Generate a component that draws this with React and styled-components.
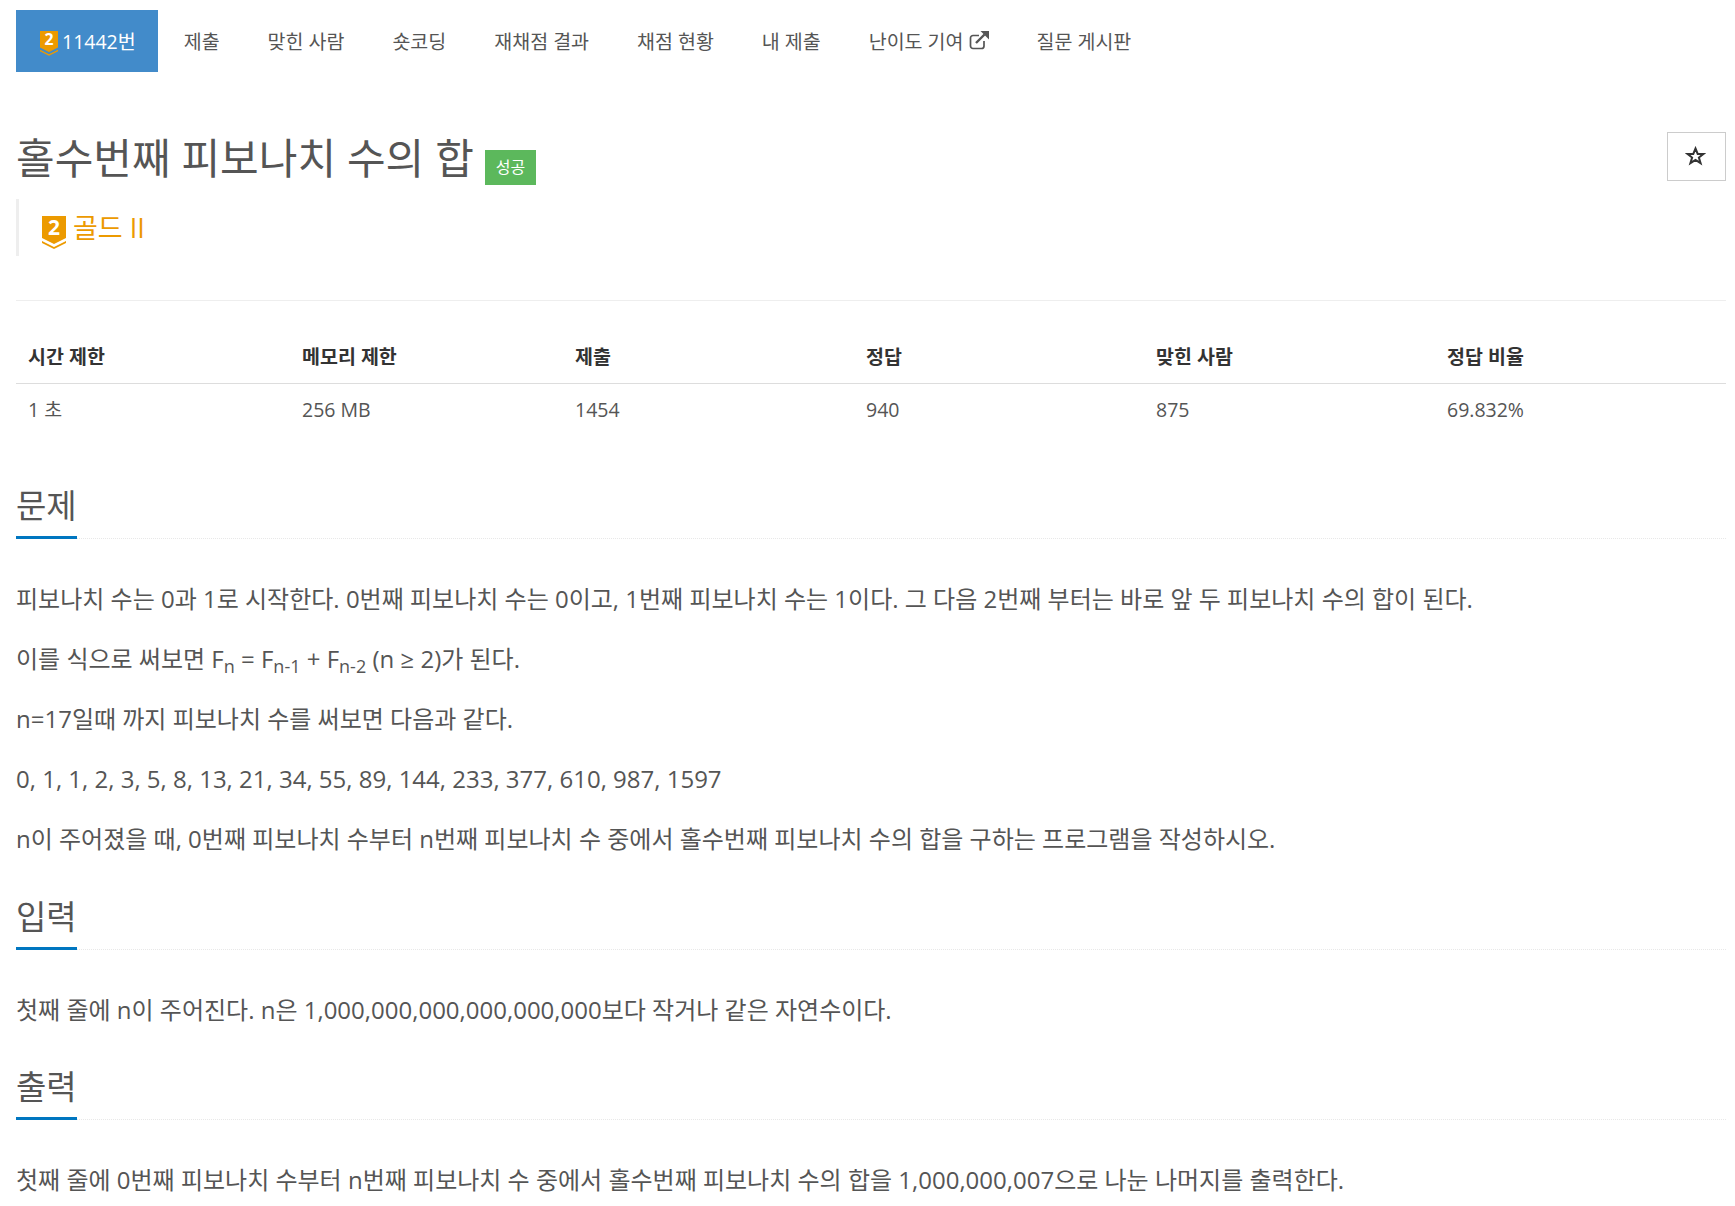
import React from 'react'
import styled, { createGlobalStyle } from 'styled-components'

const GlobalStyle = createGlobalStyle`
  html, body {
    margin: 0;
    padding: 0;
    background: #fff;
    overflow: hidden;
  }
  body {
    font-family: "Open Sans", "Noto Sans CJK KR", sans-serif;
    color: #555;
  }
`

const tabs = ['제출', '맞힌 사람', '숏코딩', '재채점 결과', '채점 현황', '내 제출']

const Badge = ({ width, shift = 0, color = '#ec9a00' }) => (
  <BadgeIcon $shift={shift} width={width} viewBox="0 0 24 33" overflow="visible" aria-hidden="true">
    <path d="M0 0H24V22L12 28L0 22Z" fill={color} />
    <path d="M0 25L12 31L24 25V27L12 33L0 27Z" fill={color} />
    <text x="12" y="19" textAnchor="middle" fontSize="21" fontWeight="700" fill="#fff" fontFamily="Open Sans">2</text>
  </BadgeIcon>
)

const ExternalIcon = () => (
  <svg width="20" height="20" viewBox="0 0 20 20" fill="none" stroke="#555" aria-hidden="true">
    <path d="M15 11V16a2.500 2.500 0 0 1-2.500 2.500H4A2.500 2.500 0 0 1 1.500 16V8A2.500 2.500 0 0 1 4 5.500H10" strokeWidth="1.700" />
    <path d="M7 13L15.500 4.500" strokeWidth="2.400" />
    <path d="M11.500 1H20V9.500Z" fill="#555" stroke="none" />
  </svg>
)

const StarIcon = () => (
  <svg width="21" height="20" viewBox="0 0 21 20" fill="none" stroke="#333" strokeWidth="2" aria-hidden="true">
    <path d="M10.500 2.500L12.700 7.900H18.600L13.900 11.500L15.600 17.200L10.500 13.900L5.400 17.200L7.100 11.500L2.400 7.900H8.300Z" />
  </svg>
)

const App = () => (
  <Page>
    <GlobalStyle />
    <Nav>
      <ActiveTab>
        <Badge width={18} shift={6} />
        11442번
      </ActiveTab>
      {tabs.map((tab) => (
        <Tab key={tab}>{tab}</Tab>
      ))}
      <Tab>
        난이도 기여
        <ExternalIcon />
      </Tab>
      <Tab>질문 게시판</Tab>
    </Nav>

    <TitleRow>
      <Title>
        홀수번째 피보나치 수의 합
        <Label>성공</Label>
      </Title>
      <StarButton>
        <StarIcon />
      </StarButton>
    </TitleRow>

    <Tier>
      <Badge width={24} shift={9} />
      <TierName>골드 II</TierName>
    </Tier>

    <Rule />

    <InfoTable>
      <thead>
        <tr>
          <Th $width={274}>시간 제한</Th>
          <Th $width={273}>메모리 제한</Th>
          <Th $width={291}>제출</Th>
          <Th $width={290}>정답</Th>
          <Th $width={291}>맞힌 사람</Th>
          <Th>정답 비율</Th>
        </tr>
      </thead>
      <tbody>
        <tr>
          <Td>1 초</Td>
          <Td>256 MB</Td>
          <Td>1454</Td>
          <Td>940</Td>
          <Td>875</Td>
          <Td>69.832%</Td>
        </tr>
      </tbody>
    </InfoTable>

    <Section>
      <Headline><h2>문제</h2></Headline>
      <Text>
        <p>피보나치 수는 0과 1로 시작한다. 0번째 피보나치 수는 0이고, 1번째 피보나치 수는 1이다. 그 다음 2번째 부터는 바로 앞 두 피보나치 수의 합이 된다.</p>
        <p>이를 식으로 써보면 F<sub>n</sub> = F<sub>n-1</sub> + F<sub>n-2</sub> (n ≥ 2)가 된다.</p>
        <p>n=17일때 까지 피보나치 수를 써보면 다음과 같다.</p>
        <p>0, 1, 1, 2, 3, 5, 8, 13, 21, 34, 55, 89, 144, 233, 377, 610, 987, 1597</p>
        <p>n이 주어졌을 때, 0번째 피보나치 수부터 n번째 피보나치 수 중에서 홀수번째 피보나치 수의 합을 구하는 프로그램을 작성하시오.</p>
      </Text>
    </Section>

    <Section>
      <Headline><h2>입력</h2></Headline>
      <Text>
        <p>첫째 줄에 n이 주어진다. n은 1,000,000,000,000,000,000보다 작거나 같은 자연수이다.</p>
      </Text>
    </Section>

    <Section>
      <Headline><h2>출력</h2></Headline>
      <Text>
        <p>첫째 줄에 0번째 피보나치 수부터 n번째 피보나치 수 중에서 홀수번째 피보나치 수의 합을 1,000,000,007으로 나눈 나머지를 출력한다.</p>
      </Text>
    </Section>
  </Page>
)

const BadgeIcon = styled.svg`
  flex-shrink: 0;
  margin-top: ${({ $shift }) => $shift}px;
`

const Page = styled.div`
  box-sizing: border-box;
  height: 1206px;
  padding: 10px 9px 0 16px;
  overflow: hidden;
`

const Nav = styled.nav`
  display: flex;
  height: 62px;
`

const Tab = styled.a`
  display: flex;
  align-items: center;
  gap: 5px;
  padding: 0 24px 2px;
  font-size: 19.5px;
  color: #555;
  white-space: pre;
`

const ActiveTab = styled(Tab)`
  gap: 4px;
  padding-right: 22px;
  margin-right: 2px;
  background: #428bca;
  color: #fff;
`

const TitleRow = styled.div`
  display: flex;
  justify-content: space-between;
  align-items: flex-start;
  margin-top: 60px;
`

const Title = styled.h1`
  display: flex;
  align-items: flex-end;
  margin: 0;
  padding-top: 4px;
  font-size: 42px;
  line-height: 44px;
  font-weight: 400;
  color: #555;
`

const Label = styled.span`
  margin: 0 0 -5px 11px;
  padding: 8px 11px 9px;
  background: #5cb85c;
  color: #fff;
  font-size: 16px;
  line-height: 18px;
`

const StarButton = styled.div`
  display: flex;
  align-items: center;
  justify-content: center;
  box-sizing: border-box;
  width: 59px;
  height: 49px;
  padding: 0 2px 2px 0;
  border: 1px solid #ccc;
`

const Tier = styled.div`
  display: flex;
  align-items: center;
  gap: 7px;
  height: 57px;
  margin-top: 18px;
  padding-left: 23px;
  border-left: 3px solid #eee;
`

const TierName = styled.span`
  margin-bottom: 2px;
  font-size: 27px;
  color: #ec9a00;
`

const Rule = styled.hr`
  margin: 44px 0 0;
  border: 0;
  border-top: 1px solid #eee;
`

const InfoTable = styled.table`
  width: 100%;
  margin-top: 30px;
  border-collapse: collapse;
  table-layout: fixed;
  font-size: 19.5px;
`

const Th = styled.th`
  box-sizing: border-box;
  width: ${({ $width }) => ($width ? `${$width}px` : 'auto')};
  padding: 12px;
  line-height: 28px;
  text-align: left;
  font-weight: 700;
  color: #333;
  border-bottom: 1px solid #ddd;
`

const Td = styled.td`
  padding: 12px;
  line-height: 28px;
  color: #555;
`

const Section = styled.section`
  margin-top: 47px;

  & + & {
    margin-top: 38.5px;
  }
`

const Headline = styled.div`
  border-bottom: 1px dotted #e8e8e8;

  h2 {
    display: inline-block;
    margin: 0 0 -1px;
    padding-bottom: 7px;
    font-size: 33px;
    line-height: 46px;
    font-weight: 400;
    color: #555;
    border-bottom: 3px solid #0076c0;
  }
`

const Text = styled.div`
  margin-top: 43px;
  font-size: 24px;
  line-height: 33px;
  color: #555;

  p {
    margin: 0 0 27px;
  }

  sub {
    font-size: 75%;
    line-height: 0;
    vertical-align: baseline;
    position: relative;
    bottom: -0.25em;
  }
`

export default App
